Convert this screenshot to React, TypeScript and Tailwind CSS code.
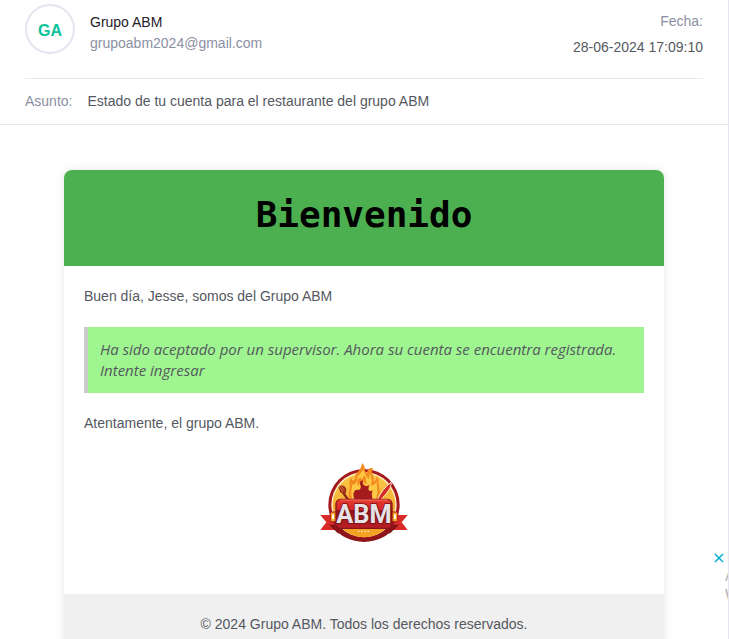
function Logo() {
  return (
    <svg viewBox="0 0 324 285" className="h-[95px] w-[108px]" role="img" aria-label="ABM">
      <defs>
        <linearGradient id="disc" x1="0" y1="0" x2="0" y2="1">
          <stop offset="0" stopColor="#fbc94a" />
          <stop offset="1" stopColor="#ef9a1e" />
        </linearGradient>
        <linearGradient id="plate" x1="0" y1="0" x2="0" y2="1">
          <stop offset="0" stopColor="#e8392f" />
          <stop offset="0.36" stopColor="#d3262a" />
          <stop offset="0.38" stopColor="#8d1419" />
          <stop offset="1" stopColor="#b91f24" />
        </linearGradient>
      </defs>
      <path d="M31 183H78V228H31L49 205Z" fill="#d92c2a" />
      <path d="M293 183H246V228H293L275 205Z" fill="#d92c2a" />
      <path d="M57 212H86V240ZM267 212H238V240Z" fill="#7d1116" />
      <circle cx="162" cy="152" r="107" fill="#a3191d" />
      <circle cx="162" cy="152" r="98" fill="#fff1cf" />
      <circle cx="162" cy="152" r="94" fill="url(#disc)" />
      <path d="M67 216A114 107 0 0 0 257 216L238 216A98 98 0 0 1 86 216Z" fill="#8c1519" />
      <path d="M96 223H228A94 94 0 0 1 96 223Z" fill="#f2a324" />
      <path d="M121 138C111 119 122 108 119 91C117 82 119 75 124 69C122 83 135 82 136 68C137 53 154 51 156 27C169 38 162 51 170 58C173 45 182 39 190 44C179 54 196 65 190 83C199 80 201 72 199 63C211 76 203 89 208 103C212 118 208 130 199 139Z" fill="#f58a1f" />
      <path d="M129 138C119 118 127 108 126 93C137 91 143 83 142 71C145 62 155 58 160 46C164 62 171 68 176 76C178 69 178 62 181 57C183 72 188 82 182 95C192 94 199 87 201 82C198 96 204 107 202 119C201 129 197 137 193 138Z" fill="#fdc945" />
      <path d="M144 96C139 81 145 74 152 69C151 79 161 75 162 62C172 75 165 83 172 88C166 92 162 85 157 78C152 84 150 89 144 96Z" fill="#f58a1f" />
      <path d="M134 137C127 123 130 106 142 107C153 110 154 98 150 90C149 84 153 79 159 79C155 94 168 101 179 92C170 109 180 115 189 109C182 119 188 127 187 137Z" fill="#a51c1d" />
      <path d="M100 117L117 141" stroke="#8c2619" strokeWidth="7" />
      <path d="M85 100L94 94L103 96L109 105L108 116L101 121L91 115Z" fill="#9b2b1b" />
      <path d="M88 99L99 114M94 96L103 110" stroke="#eda72d" strokeWidth="2" />
      <path d="M201 139C211 117 225 98 243 85C246 101 230 118 211 139Z" fill="#d52d26" stroke="#fde8ca" strokeWidth="3" />
      <path d="M61 174H83V203H61ZM241 174H263V203H241Z" fill="#f5a527" stroke="#b71c20" strokeWidth="3" />
      <path d="M66 181H72V195H66ZM252 181H258V195H252Z" fill="#fff6df" />
      <rect x="78" y="136" width="168" height="87" rx="14" fill="url(#plate)" stroke="#8c1519" strokeWidth="4" />
      <path d="M91 138H234" stroke="#f57762" strokeWidth="3" />
      <text x="162" y="208" textAnchor="middle" fontFamily="Roboto, Liberation Sans, sans-serif" fontSize="76" fontWeight="700" fill="#e6e3e8" stroke="#741318" strokeWidth="5" paintOrder="stroke">ABM</text>
      <path d="M144 232H149M153 232H159M163 232H168M172 232H178" stroke="#fff0be" strokeWidth="3" />
    </svg>
  );
}

export default function App() {
  return (
    <div className="relative h-screen overflow-hidden border-r border-[#e5e4ef] bg-white font-['Liberation_Sans',Arial,sans-serif] text-sm text-[#55585f]">
      <header className="border-b border-[#e8e7f0]">
        <div className="mx-[25px] flex h-[79px] items-start border-b border-[#e8e7f0] pt-1">
          <div className="flex size-[50px] shrink-0 items-center justify-center rounded-full border-2 border-[#e5e4ef] pt-1 text-base font-bold text-[#0ac29a]">
            GA
          </div>
          <div className="ml-[15px] pt-2 leading-[21px]">
            <p className="text-[#1f2028]">Grupo ABM</p>
            <p className="text-[#8b8fa3]">grupoabm2024@gmail.com</p>
          </div>
          <div className="ml-auto pt-1 text-right leading-[26px]">
            <p className="text-[#8b8fa3]">Fecha:</p>
            <p>28-06-2024 17:09:10</p>
          </div>
        </div>
        <div className="mx-[25px] flex h-[45px] items-center gap-[15px] pb-0.5">
          <span className="text-[#8b8fa3]">Asunto:</span>
          <span>Estado de tu cuenta para el restaurante del grupo ABM</span>
        </div>
      </header>

      <main className="px-4 pt-[45px]">
        <article className="mx-auto max-w-[600px] overflow-hidden rounded-lg shadow-[0_0_10px_rgba(0,0,0,0.1)]">
          <h1 className="bg-[#4db050] pt-[21px] pb-[27px] text-center font-['DejaVu_Sans_Mono',monospace] text-[36px] leading-[48px] font-bold text-black">
            Bienvenido
          </h1>
          <div className="flex flex-col gap-5 px-5 pt-5 pb-[45px] leading-[21px]">
            <p>Buen día, Jesse, somos del Grupo ABM</p>
            <blockquote className="border-l-4 border-[#ccc] bg-[#9ff58f] p-3 font-['Open_Sans',sans-serif] text-[15px] leading-[21px] italic">
              Ha sido aceptado por un supervisor. Ahora su cuenta se encuentra registrada. Intente ingresar
            </blockquote>
            <p>Atentamente, el grupo ABM.</p>
            <div className="flex justify-center">
              <Logo />
            </div>
          </div>
          <footer className="bg-[#f0f0f0] p-5 text-center leading-[21px]">
            © 2024 Grupo ABM. Todos los derechos reservados.
          </footer>
        </article>
      </main>

      <aside className="absolute top-[550px] right-0 w-[15px]">
        <button type="button" aria-label="Cerrar" className="flex h-4 w-3 items-center justify-center text-[#00aecd]">
          <svg viewBox="0 0 10 10" className="size-[10px]" fill="none" stroke="currentColor" strokeWidth="1.5">
            <path d="M1 1L9 9M9 1L1 9" />
          </svg>
        </button>
        <p className="ml-3 w-[3px] overflow-hidden text-base leading-5 text-[#b5b5b5]">
          A<br />W
        </p>
      </aside>
    </div>
  );
}
